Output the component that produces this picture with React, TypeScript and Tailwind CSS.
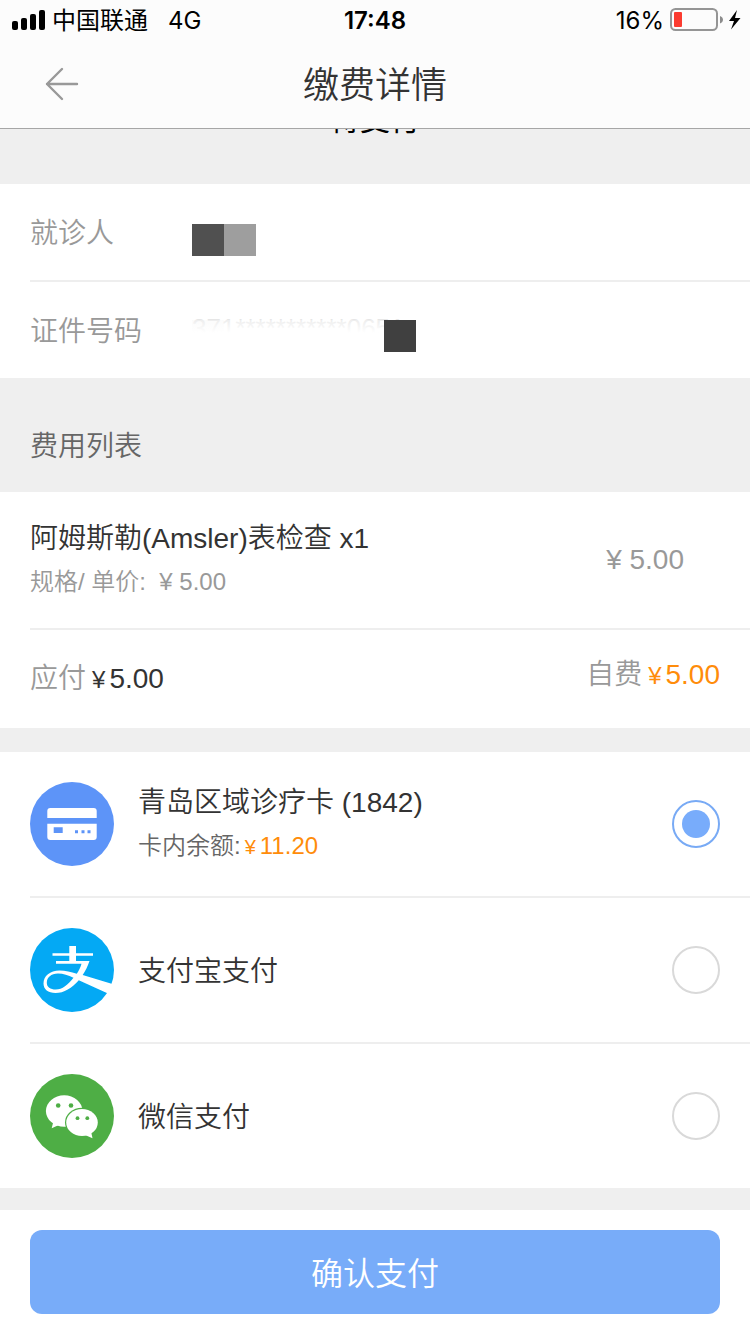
import { useState } from "react";
import type { ReactNode } from "react";

interface PayMethod {
  id: string;
  name: string;
  balance?: string;
  icon: ReactNode;
}

function SignalIcon() {
  return (
    <svg className="h-5 w-[34px]" viewBox="0 0 34 20" aria-hidden="true">
      <rect x="0" y="11" width="6" height="9" rx="2" />
      <rect x="9" y="8" width="6" height="12" rx="2" />
      <rect x="18" y="4" width="6" height="16" rx="2" />
      <rect x="27" y="0" width="6" height="20" rx="2" />
    </svg>
  );
}

function BatteryIcon() {
  return (
    <svg className="h-6 w-[72px]" viewBox="0 0 72 24" aria-hidden="true">
      <rect x="1" y="1" width="46" height="21" rx="4.5" fill="none" stroke="#959595" strokeWidth="2" />
      <rect x="4" y="4" width="8" height="15" rx="1" fill="#fb3b30" />
      <path d="M50 8c4 1.500 4 6 0 7.500z" fill="#8c8c8c" />
      <path d="M67 2l-8 11h5l-3 8.500 9.500-11.500h-5.500z" fill="#000" />
    </svg>
  );
}

function BackIcon() {
  return (
    <svg className="h-[34px] w-[34px]" viewBox="0 0 34 34" fill="none" stroke="#999" strokeWidth="2.4" strokeLinecap="round" strokeLinejoin="round" aria-hidden="true">
      <path d="M32 17H2M17 2L2 17l15 15" />
    </svg>
  );
}

function CardIcon() {
  return (
    <svg className="size-21 shrink-0" viewBox="0 0 84 84" aria-hidden="true">
      <circle cx="42" cy="42" r="42" fill="#5d94f8" />
      <path d="M17.300 36v-7a3 3 0 0 1 3-3h43.400a3 3 0 0 1 3 3v7zM17.300 41.700h49.400V55a3 3 0 0 1-3 3H20.300a3 3 0 0 1-3-3z" fill="#fff" />
      <path d="M23.700 45.300h9V51h-9zM45 48.200h3v3h-3zM51.500 48.200h3v3h-3zM57.500 48.200h3v3h-3z" fill="#5d94f8" />
    </svg>
  );
}

function AlipayIcon() {
  return (
    <svg className="size-21 shrink-0" viewBox="0 0 84 84" aria-hidden="true">
      <circle cx="42" cy="42" r="42" fill="#04a9f4" />
      <path d="M22.500 25.200h16.800V18h6.700v7.200h17v2.500H46v5.400h13.500c-1.800 5.200-4 9.800-6.800 14L84 56.500l-5.500 9.300-29.700-13.600C42 60 34 65 25.500 65 18 65 13.500 61.300 13.500 55.500c0-7.500 6.500-13 16-13 6 0 11.500 1.400 17.300 3.200 2-3 3.700-6.200 4.700-10H26v-2.600h13.300v-5.400H22.500zM43.500 49.800c-5.500-2.700-10-4.300-15.500-4.300-7 0-11.200 4-11.200 9.200 0 4.300 3.500 6.800 9 6.800 6.500 0 12.200-4.500 17.700-11.700z" fill="#fff" fillRule="evenodd" />
    </svg>
  );
}

function WechatIcon() {
  return (
    <svg className="size-21 shrink-0" viewBox="0 0 84 84" aria-hidden="true">
      <circle cx="42" cy="42" r="42" fill="#4eae45" />
      <ellipse cx="34.200" cy="37" rx="18.300" ry="15.700" fill="#fff" />
      <path d="M23.500 47l-1.800 7.300 8.300-3.800z" fill="#fff" />
      <ellipse cx="52" cy="48.500" rx="17" ry="14.700" fill="#4eae45" />
      <ellipse cx="52" cy="48.500" rx="15.800" ry="13.500" fill="#fff" />
      <path d="M55 61l7.500 3.300-1.500-7z" fill="#fff" />
      <g fill="#4eae45">
        <circle cx="28.200" cy="31.500" r="2.300" />
        <circle cx="41" cy="31.500" r="2.300" />
        <circle cx="47.500" cy="44.200" r="1.900" />
        <circle cx="57.300" cy="44.200" r="1.900" />
      </g>
    </svg>
  );
}

const METHODS: PayMethod[] = [
  { id: "card", name: "青岛区域诊疗卡 (1842)", balance: "11.20", icon: <CardIcon /> },
  { id: "alipay", name: "支付宝支付", icon: <AlipayIcon /> },
  { id: "wechat", name: "微信支付", icon: <WechatIcon /> },
];

function StatusBar() {
  return (
    <div className="grid h-10 grid-cols-[1fr_auto_1fr] items-center px-3 font-['Inter','Noto_Sans_CJK_SC',sans-serif] text-2xl font-normal text-black">
      <div className="flex items-center">
        <SignalIcon />
        <span className="ml-1.5 pt-0.5">中国联通</span>
        <span className="ml-5 pt-0.5">4G</span>
      </div>
      <span className="pt-0.5 font-semibold">17:48</span>
      <div className="-mr-1 flex items-center justify-end gap-1.5">
        <span className="pt-0.5">16%</span>
        <BatteryIcon />
      </div>
    </div>
  );
}

export default function App() {
  const [method, setMethod] = useState("card");

  return (
    <div className="min-h-screen bg-[#efefef] font-['Liberation_Sans','Noto_Sans_CJK_SC',sans-serif] text-[28px] leading-10 font-[350] text-[#333]">
      <header className="border-b border-[#a6a6a6] bg-[#fcfcfc]">
        <StatusBar />
        <div className="grid h-22 grid-cols-[1fr_auto_1fr] items-center px-[45px]">
          <button type="button" aria-label="返回" className="justify-self-start">
            <BackIcon />
          </button>
          <h1 className="pt-1 text-4xl font-[350]">缴费详情</h1>
        </div>
      </header>

      {/* scrolled status line, mostly hidden behind the header */}
      <div className="h-[55px] overflow-hidden">
        <p className="-mt-6 text-center text-[30px] leading-[30px] font-normal text-black">待支付</p>
      </div>

      <dl className="bg-white pl-[30px]">
        <div className="flex h-[98px] items-center border-b-2 border-[#eee]">
          <dt className="w-[162px] pt-1 text-[#999]">就诊人</dt>
          <dd className="mt-4 flex">
            <span className="size-8 bg-[#505050]" />
            <span className="size-8 bg-[#9e9e9e]" />
          </dd>
        </div>
        <div className="flex h-24 items-center">
          <dt className="w-[162px] pt-1 text-[#999]">证件号码</dt>
          <dd className="relative mt-3 flex h-8 w-56 justify-between">
            <span className="size-8 bg-[#fafafa]" />
            <span className="absolute inset-x-0 -top-2 text-[26px] leading-8 text-[#e6e6e6]">371***********0651</span>
            <span className="absolute inset-0 bg-linear-to-b from-white/30 to-white to-40%" />
            <span className="relative size-8 bg-[#404040]" />
          </dd>
        </div>
      </dl>

      <h2 className="flex h-[114px] items-center px-[30px] pt-6 font-[350] text-[#666]">费用列表</h2>

      <section className="bg-white pl-[30px]">
        <div className="flex h-[138px] items-center justify-between border-b-2 border-[#eee] pr-[66px]">
          <div className="pt-1">
            <p>阿姆斯勒(Amsler)表检查 x1</p>
            <p className="text-2xl leading-[46px] text-[#999]">规格/ 单价:&nbsp; ¥ 5.00</p>
          </div>
          <span className="text-[#999]">¥ 5.00</span>
        </div>
        <div className="flex h-[98px] items-center justify-between pr-[30px]">
          <p className="flex items-baseline">
            <span className="text-[#999]">应付</span>
            <span className="mr-1 ml-1.5 text-2xl">¥</span>
            <span>5.00</span>
          </p>
          <p className="mb-2 flex items-baseline text-[#ff8c0a]">
            <span className="text-[#999]">自费</span>
            <span className="mr-1 ml-1.5 text-2xl">¥</span>
            <span>5.00</span>
          </p>
        </div>
      </section>

      <form onSubmit={(e) => e.preventDefault()}>
        <div className="mt-6 bg-white pl-[30px]">
          {METHODS.map((m, i) => (
            <label
              key={m.id}
              className={`flex items-center pr-[30px] ${i < METHODS.length - 1 ? "h-[146px] border-b-2 border-[#eee]" : "h-36"}`}
            >
              {m.icon}
              <div className="ml-6 flex-1 pt-1">
                <p>{m.name}</p>
                {m.balance && (
                  <p className="flex items-baseline text-2xl leading-[46px] text-[#666]">
                    卡内余额:
                    <span className="mr-1 ml-1 text-xl text-[#ff8c0a]">¥</span>
                    <span className="text-[#ff8c0a]">{m.balance}</span>
                  </p>
                )}
              </div>
              <input
                type="radio"
                name="method"
                checked={method === m.id}
                onChange={() => setMethod(m.id)}
                className="grid size-12 appearance-none place-content-center rounded-full border-2 border-[#d9d9d9] before:size-7 before:rounded-full checked:border-[#78aaf5] checked:before:bg-[#78acfb]"
              />
            </label>
          ))}
        </div>
        <div className="mt-[22px] bg-white px-[30px] py-5">
          <button type="submit" className="h-21 w-full rounded-xl bg-[#78acf9] pt-1 text-[32px] font-[350] text-white">
            确认支付
          </button>
        </div>
      </form>
    </div>
  );
}
